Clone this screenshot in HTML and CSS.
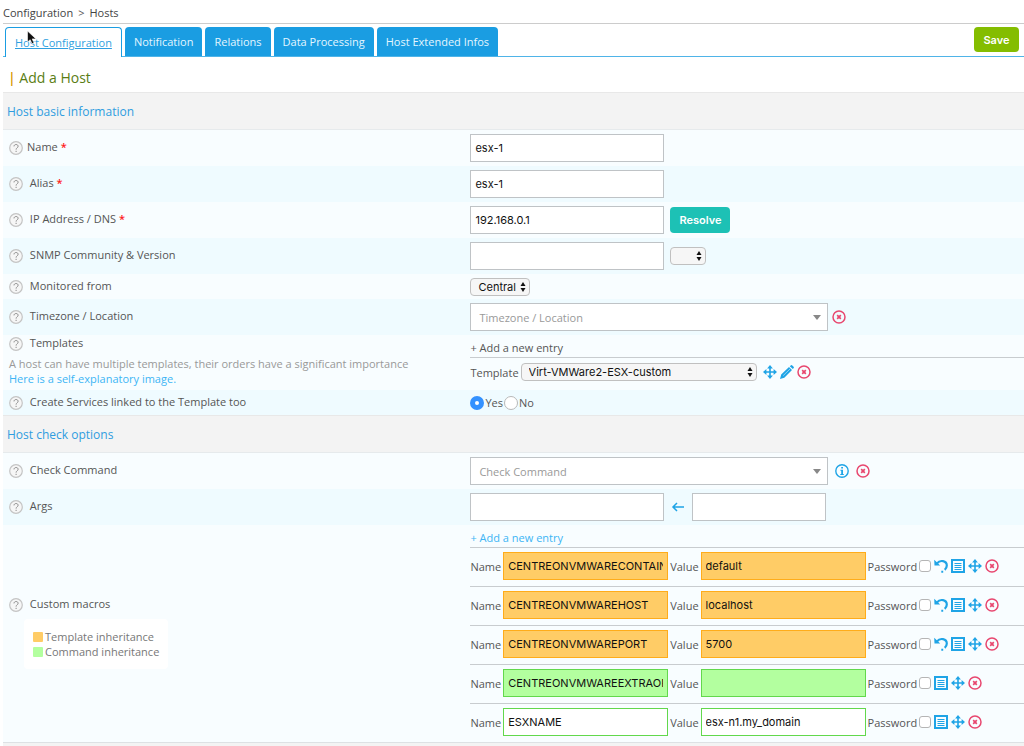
FILE: index.html
```html
<!DOCTYPE html>
<html lang="en">

<head>
    <meta charset="UTF-8">
    <meta name="viewport" content="width=device-width, initial-scale=1.0">
    <title>Configuration > Hosts</title>
    <link rel="stylesheet" href="styles.css">
</head>

<body>
    <!-- icons -->
    <svg class="sprite" aria-hidden="true">
        <symbol id="i-help" viewBox="0 0 14 14">
            <circle cx="7" cy="7" r="6.3" fill="#f6f6f6" stroke="#c4c4c4" stroke-width="1.2" />
            <path d="M5 5.4C5 2.9 9.1 2.9 9.1 5.3C9.1 6.8 7.1 6.8 7.1 8.6M7.1 9.8V11" fill="none" stroke="#8c8c8c" stroke-width="1" />
        </symbol>
        <symbol id="i-delete" viewBox="0 0 14 14">
            <circle cx="7" cy="7" r="6" fill="none" stroke="currentColor" stroke-width="1.5" />
            <path d="M5.2 5.2L8.8 8.8M8.8 5.2L5.2 8.8" stroke="currentColor" stroke-width="1.7" />
        </symbol>
        <symbol id="i-info" viewBox="0 0 14 14">
            <circle cx="7" cy="7" r="6.2" fill="none" stroke="currentColor" stroke-width="1.4" />
            <path d="M6.2 3h1.8v1.6H6.2zM5.4 5.7H8v4.2h.8V11H5.3V9.9h.9V6.8h-.8z" fill="currentColor" />
        </symbol>
        <symbol id="i-move" viewBox="0 0 14 14">
            <path d="M7 2V12M2 7H12" stroke="currentColor" stroke-width="1.6" />
            <path d="M7 0L9.9 3.4H4.1zM7 14L4.1 10.6H9.9zM0 7L3.4 4.1V9.9zM14 7L10.6 9.9V4.1z" fill="currentColor" />
        </symbol>
        <symbol id="i-edit" viewBox="0 0 14 14">
            <path d="M0 14L1.2 9.6L9 2L12 5L4.3 12.7zM9.8 1.2L11 .2Q11.6-.2 12.3.4L13.6 1.7Q14.2 2.4 13.7 3L12.8 4.1z" fill="currentColor" />
            <path d="M3.2 10.6L10 4" stroke="#bfe6fa" stroke-width=".7" />
        </symbol>
        <symbol id="i-undo" viewBox="0 0 14 14">
            <path d="M3 4.4C6 .5 12.8 1.5 12.8 6.6C12.8 8.6 12 9.8 10.7 10.8" fill="none" stroke="currentColor" stroke-width="2.2" />
            <path d="M.2.8L.5 6.6H6.2zM7.3 11.8h1.9v1.9H7.3z" fill="currentColor" />
        </symbol>
        <symbol id="i-list" viewBox="0 0 14 14">
            <path d="M1 1H13V13H1z" fill="none" stroke="currentColor" stroke-width="2" />
            <path d="M3.5 4.5H10.5M3.5 6.5H10.5M3.5 8.5H10.5M3.5 10.5H10.5" stroke="currentColor" stroke-width="1" />
        </symbol>
        <symbol id="i-left" viewBox="0 0 14 14">
            <path d="M13 7H2M6 3L2 7L6 11" fill="none" stroke="currentColor" stroke-width="1.5" />
        </symbol>
        <symbol id="i-updown" viewBox="0 0 6 10">
            <path d="M3 0L5.5 4H.5zM3 10L.5 6H5.5z" fill="#111" />
        </symbol>
        <symbol id="i-down" viewBox="0 0 8 5">
            <path d="M0 0H8L4 5z" fill="#888" />
        </symbol>
    </svg>

    <nav class="path">
        <a href="#">Configuration</a>
        <span>&gt;</span>
        <a href="#">Hosts</a>
    </nav>

    <form class="page">
        <div class="topbar">
            <ul class="tabs">
                <li class="active"><a href="#">Host Configuration</a>
                    <svg class="pointer" viewBox="0 0 10 14">
                        <path d="M.5.5V11.5L3.2 9.2L5 13.3L7 12.4L5.2 8.4H9z" fill="#111" stroke="#fff" stroke-width=".6" />
                    </svg>
                </li>
                <li><a href="#">Notification</a></li>
                <li><a href="#">Relations</a></li>
                <li><a href="#">Data Processing</a></li>
                <li><a href="#">Host Extended Infos</a></li>
            </ul>
            <button type="submit" class="btn save">Save</button>
        </div>

        <h1 class="title"><span class="bar">|</span> Add a Host</h1>

        <h2 class="section">Host basic information</h2>

        <div class="row">
            <div class="label"><svg class="help"><use href="#i-help" /></svg><label for="name">Name <b class="req">*</b></label></div>
            <div class="field"><input type="text" class="text" id="name" value="esx-1"></div>
        </div>
        <div class="row odd">
            <div class="label"><svg class="help"><use href="#i-help" /></svg> <label for="alias">Alias <b class="req">*</b></label></div>
            <div class="field"><input type="text" class="text" id="alias" value="esx-1"></div>
        </div>
        <div class="row">
            <div class="label"><svg class="help"><use href="#i-help" /></svg> <label for="ip">IP Address / DNS <b class="req">*</b></label></div>
            <div class="field">
                <input type="text" class="text" id="ip" value="192.168.0.1">
                <button type="button" class="btn resolve">Resolve</button>
            </div>
        </div>
        <div class="row odd">
            <div class="label"><svg class="help"><use href="#i-help" /></svg> <label for="snmp">SNMP Community &amp; Version</label></div>
            <div class="field">
                <input type="text" class="text" id="snmp">
                <span class="select version">
                    <select aria-label="Version"><option></option></select>
                    <svg><use href="#i-updown" /></svg>
                </span>
            </div>
        </div>
        <div class="row small">
            <div class="label"><svg class="help"><use href="#i-help" /></svg> <label for="poller">Monitored from</label></div>
            <div class="field">
                <span class="select poller">
                    <select id="poller"><option>Central</option></select>
                    <svg><use href="#i-updown" /></svg>
                </span>
            </div>
        </div>
        <div class="row odd">
            <div class="label"><svg class="help"><use href="#i-help" /></svg> <label for="timezone">Timezone / Location</label></div>
            <div class="field picker">
                <span class="combo">
                    <select id="timezone"><option>Timezone / Location</option></select>
                    <svg><use href="#i-down" /></svg>
                </span>
                <svg class="icon red"><use href="#i-delete" /></svg>
            </div>
        </div>
        <div class="row top">
            <div class="label">
                <svg class="help"><use href="#i-help" /></svg> <label for="template">Templates</label>
                <p class="note">A host can have multiple templates, their orders have a significant importance<br>
                    <a href="#">Here is a self-explanatory image.</a></p>
            </div>
            <div class="field clones">
                <div class="add">+ Add a new entry</div>
                <div class="clone template">
                    <label for="template">Template</label>
                    <span class="select tpl">
                        <select id="template"><option>Virt-VMWare2-ESX-custom</option></select>
                        <svg><use href="#i-updown" /></svg>
                    </span>
                    <span class="icons">
                        <svg class="icon"><use href="#i-move" /></svg>
                        <svg class="icon"><use href="#i-edit" /></svg>
                        <svg class="icon red"><use href="#i-delete" /></svg>
                    </span>
                </div>
            </div>
        </div>
        <div class="row small odd">
            <div class="label"><svg class="help"><use href="#i-help" /></svg> Create Services linked to the Template too</div>
            <div class="field radios">
                <input type="radio" name="create" id="yes" checked><label for="yes">Yes</label>
                <input type="radio" name="create" id="no"><label for="no">No</label>
            </div>
        </div>

        <h2 class="section">Host check options</h2>

        <div class="row">
            <div class="label"><svg class="help"><use href="#i-help" /></svg> <label for="command">Check Command</label></div>
            <div class="field">
                <span class="combo">
                    <select id="command"><option>Check Command</option></select>
                    <svg><use href="#i-down" /></svg>
                </span>
                <span class="icons wide">
                    <svg class="icon"><use href="#i-info" /></svg>
                    <svg class="icon red"><use href="#i-delete" /></svg>
                </span>
            </div>
        </div>
        <div class="row odd">
            <div class="label"><svg class="help"><use href="#i-help" /></svg> <label for="args">Args</label></div>
            <div class="field args">
                <input type="text" class="text" id="args">
                <svg class="icon"><use href="#i-left" /></svg>
                <input type="text" class="text example" aria-label="Example">
            </div>
        </div>
        <div class="row macros">
            <div class="label">
                <svg class="help"><use href="#i-help" /></svg> Custom macros
                <ul class="legend">
                    <li><i class="orange"></i>Template inheritance</li>
                    <li><i class="green"></i>Command inheritance</li>
                </ul>
            </div>
            <div class="field clones">
                <div class="add"><a href="#">+ Add a new entry</a></div>
                <div class="clone">
                    <label for="n1">Name</label><input type="text" class="text orange" id="n1" value="CENTREONVMWARECONTAINER">
                    <label for="v1">Value</label><input type="text" class="text orange" id="v1" value="default">
                    <label for="p1">Password</label><input type="checkbox" id="p1">
                    <span class="icons">
                        <svg class="icon"><use href="#i-undo" /></svg>
                        <svg class="icon"><use href="#i-list" /></svg>
                        <svg class="icon"><use href="#i-move" /></svg>
                        <svg class="icon red"><use href="#i-delete" /></svg>
                    </span>
                </div>
                <div class="clone">
                    <label for="n2">Name</label><input type="text" class="text orange" id="n2" value="CENTREONVMWAREHOST">
                    <label for="v2">Value</label><input type="text" class="text orange" id="v2" value="localhost">
                    <label for="p2">Password</label><input type="checkbox" id="p2">
                    <span class="icons">
                        <svg class="icon"><use href="#i-undo" /></svg>
                        <svg class="icon"><use href="#i-list" /></svg>
                        <svg class="icon"><use href="#i-move" /></svg>
                        <svg class="icon red"><use href="#i-delete" /></svg>
                    </span>
                </div>
                <div class="clone">
                    <label for="n3">Name</label><input type="text" class="text orange" id="n3" value="CENTREONVMWAREPORT">
                    <label for="v3">Value</label><input type="text" class="text orange" id="v3" value="5700">
                    <label for="p3">Password</label><input type="checkbox" id="p3">
                    <span class="icons">
                        <svg class="icon"><use href="#i-undo" /></svg>
                        <svg class="icon"><use href="#i-list" /></svg>
                        <svg class="icon"><use href="#i-move" /></svg>
                        <svg class="icon red"><use href="#i-delete" /></svg>
                    </span>
                </div>
                <div class="clone">
                    <label for="n4">Name</label><input type="text" class="text green" id="n4" value="CENTREONVMWAREEXTRAOPTIONS">
                    <label for="v4">Value</label><input type="text" class="text green" id="v4">
                    <label for="p4">Password</label><input type="checkbox" id="p4">
                    <span class="icons">
                        <svg class="icon"><use href="#i-list" /></svg>
                        <svg class="icon"><use href="#i-move" /></svg>
                        <svg class="icon red"><use href="#i-delete" /></svg>
                    </span>
                </div>
                <div class="clone">
                    <label for="n5">Name</label><input type="text" class="text custom" id="n5" value="ESXNAME">
                    <label for="v5">Value</label><input type="text" class="text custom" id="v5" value="esx-n1.my_domain">
                    <label for="p5">Password</label><input type="checkbox" id="p5">
                    <span class="icons">
                        <svg class="icon"><use href="#i-list" /></svg>
                        <svg class="icon"><use href="#i-move" /></svg>
                        <svg class="icon red"><use href="#i-delete" /></svg>
                    </span>
                </div>
            </div>
        </div>
        <div class="end"></div>
    </form>
</body>

</html>
```
FILE: styles.css
```css
* {
    box-sizing: border-box;
    margin: 0;
    padding: 0;
}

body {
    padding-left: 3px;
    background-color: #fff;
    color: #555;
    font-family: "Open Sans", sans-serif;
    font-size: 11px;
    line-height: 15px;
}

a {
    color: #3db5f5;
    text-decoration: none;
}

ul {
    list-style: none;
}

.sprite {
    display: none;
}

/* breadcrumb */
.path {
    display: flex;
    gap: 5px;
    height: 24px;
    padding-top: 5px;
    border-bottom: 1px solid #ccc;
}

.path a {
    color: #444;
}

/* tabs */
.topbar {
    display: flex;
    justify-content: space-between;
    align-items: flex-start;
    height: 33px;
    padding: 3px 5px 0 2px;
    border-bottom: 1px solid #4fb4e8;
}

.tabs {
    display: flex;
    gap: 3px;
}

.tabs li {
    position: relative;
    height: 29px;
    padding: 7px 9px;
    border-radius: 4px 4px 0 0;
    background-color: #1a9de2;
}

.tabs a {
    color: #e4f6ff;
    font-weight: 500;
}

.tabs .active {
    height: 30px;
    border: 1px solid #1a9de2;
    border-bottom: none;
    background-color: #fff;
}

.tabs .active a {
    color: #2f9fe0;
    font-weight: 400;
    text-decoration: underline;
}

.pointer {
    position: absolute;
    left: 21px;
    top: 2px;
    width: 10px;
    height: 15px;
}

.btn {
    border: none;
    border-radius: 4px;
    color: #fff;
    font-family: Inter, sans-serif;
    font-size: 11px;
    font-weight: 600;
}

.save {
    width: 45px;
    height: 25px;
    background-color: #84bd00;
}

.resolve {
    width: 60px;
    height: 26px;
    background-color: #1dc1b5;
}

.title {
    height: 35px;
    padding: 11px 5px;
    color: #5a7d14;
    font-size: 14px;
    font-weight: 400;
    line-height: 20px;
}

.bar {
    color: #d99a00;
    font-weight: 600;
}

.section {
    height: 38px;
    padding: 9px 4px;
    border-top: 1px solid #e8e8e8;
    border-bottom: 1px solid #e6eaec;
    background-color: #f3f3f3;
    color: #2f9de0;
    font-size: 12px;
    font-weight: 400;
    line-height: 20px;
}

/* form rows */
.row {
    display: grid;
    grid-template-columns: 45% 1fr;
    align-items: center;
    min-height: 36px;
    background-color: #f8fdff;
}

.odd {
    background-color: #effbff;
}

.small {
    min-height: 25px;
}

.top {
    align-items: start;
    min-height: 55px;
}

.label {
    padding: 0 0 2px 6px;
}

.help {
    width: 14px;
    height: 14px;
    margin-right: 4px;
    vertical-align: -4px;
}

.req {
    color: #ff1a1a;
    font-weight: 600;
}

.note {
    margin-top: 5px;
    color: #999;
}

.field {
    display: flex;
    align-items: center;
    gap: 6px;
    padding-left: 8px;
}

.text {
    width: 194px;
    height: 28px;
    padding: 0 4px;
    border: 1px solid #bfc3c6;
    background-color: #fff;
    color: #111;
    font-family: Inter, sans-serif;
    font-size: 11px;
}

.select,
.combo {
    display: grid;
    align-items: center;
}

.select > *,
.combo > * {
    grid-area: 1 / 1;
}

.select svg,
.combo svg {
    justify-self: end;
    pointer-events: none;
}

.select select {
    appearance: none;
    width: 100%;
    height: 18px;
    padding-left: 7px;
    border: 1px solid #c0c0c0;
    border-radius: 4px;
    background-color: #f6f6f6;
    color: #111;
    font-family: Inter, sans-serif;
    font-size: 11px;
}

.select svg {
    width: 6px;
    height: 10px;
    margin-right: 4px;
}

.version {
    width: 36px;
}

.poller {
    width: 60px;
}

.tpl {
    width: 236px;
}

.combo {
    width: 358px;
}

.combo select {
    appearance: none;
    width: 100%;
    height: 28px;
    padding-left: 8px;
    border: 1px solid #bfc3c6;
    background-color: #fff;
    color: #999;
    font-family: "Open Sans", sans-serif;
    font-size: 11px;
}

.combo svg {
    width: 8px;
    height: 5px;
    margin-right: 7px;
}

.picker {
    gap: 4px;
}

.icon {
    flex: none;
    width: 14px;
    height: 14px;
    color: #1fa4e6;
}

.red {
    color: #e8476f;
}

.icons {
    display: flex;
    gap: 3px;
}

.wide {
    gap: 7px;
    padding-left: 1px;
}

.radios {
    gap: 1px;
}

.radios input {
    appearance: none;
    width: 14px;
    height: 14px;
    border: 1px solid #b8b8b8;
    border-radius: 50%;
    background-color: #fff;
}

.radios input:checked {
    border: 5px solid #3391ff;
}

.args {
    gap: 7px;
}

.example {
    width: 134px;
}

/* cloned entries */
.clones {
    display: block;
}

.add {
    padding: 5px 0 2px;
}

.clone {
    display: flex;
    align-items: center;
    gap: 2px;
    height: 39px;
    padding-bottom: 2px;
    border-top: 1px solid #c8cccf;
}

.template {
    height: 29px;
    padding-bottom: 0;
}

.template .icons {
    margin-left: 4px;
}

.clone .text {
    width: 165px;
}

.clone input[type="checkbox"] {
    appearance: none;
    width: 12px;
    height: 12px;
    margin-right: 1px;
    border: 1px solid #b5b5b5;
    border-radius: 3px;
    background-color: #fff;
}

.clone input[type="checkbox"]:checked {
    background-color: #3391ff;
}

.text.orange,
.orange {
    border-color: #ffac1a;
    background-color: #ffcc66;
}

.text.green,
.green {
    border-color: #62d84c;
    background-color: #b3ff9f;
}

.text.custom {
    border-color: #62d84c;
}

.legend {
    width: max-content;
    margin: 7px 0 0 15px;
    padding: 10px 9px;
    border-radius: 4px;
    background-color: #fff;
    color: #777;
}

.legend li {
    display: flex;
    align-items: center;
    gap: 2px;
}

.legend i {
    width: 10px;
    height: 10px;
    border-radius: 1px;
}

.end {
    height: 4px;
    border-top: 1px solid #dde1e4;
    background-color: #f3f3f3;
}
```
